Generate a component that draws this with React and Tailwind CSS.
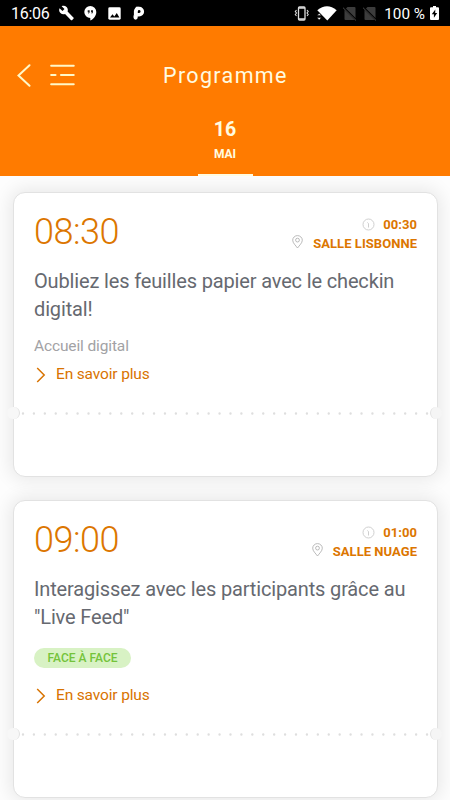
const SESSIONS = [
  {
    time: '08:30',
    duration: '00:30',
    room: 'SALLE LISBONNE',
    title: ['Oubliez les feuilles papier avec le checkin', 'digital!'],
    subtitle: 'Accueil digital',
  },
  {
    time: '09:00',
    duration: '01:00',
    room: 'SALLE NUAGE',
    title: ['Interagissez avec les participants grâce au', '"Live Feed"'],
    tag: 'FACE À FACE',
  },
];

function NoSim() {
  return (
    <svg width="14" height="15" viewBox="0 0 14 15">
      <path d="M4.500 1H11.500Q12.500 1 12.500 2V14H2.500Q1.500 14 1.500 13V4Z" fill="#3c3c3c" />
      <path d="M0 1 13.500 14.500" stroke="#000" strokeWidth="2" />
      <path d="M0 1.700 13 14.500" stroke="#4a4a4a" strokeWidth="1" />
    </svg>
  );
}

function StatusBar() {
  return (
    <div className="flex h-[26px] items-center bg-black pl-[11px] pr-[11px] text-white">
      <span className="w-[39px] whitespace-nowrap text-[16px] leading-[26px] tracking-[-0.3px] pt-[2px]">16:06</span>
      <svg className="ml-[8px]" width="17" height="16" viewBox="0 0 24 24" fill="#fff">
        <path d="M22.7 19l-9.1-9.1c.9-2.3.4-5-1.5-6.9-2-2-5-2.4-7.4-1.3L9 6 6 9 1.6 4.7C.4 7.1.9 10.1 2.9 12.1c1.9 1.9 4.6 2.4 6.9 1.5l9.1 9.1c.4.4 1 .4 1.4 0l2.3-2.3c.5-.4.5-1.1.1-1.4z" />
      </svg>
      <svg className="ml-[9px]" width="13" height="16" viewBox="0 0 13 16">
        <path d="M6.300 1a6 6 0 0 1 6 6c0 4-2.800 7-6 8.600v-2.600a6 6 0 0 1 0-12Z" fill="#fff" />
        <path d="M3.700 5.300h2v1.900l-.8 1.300h-.8l.5-1.300h-.9ZM7 5.300h2v1.900l-.8 1.300h-.8l.5-1.300H7Z" fill="#222" />
      </svg>
      <svg className="ml-[11px]" width="13" height="13" viewBox="0 0 13 13">
        <rect x=".3" y=".3" width="12.400" height="12.400" rx="1.400" fill="#fff" />
        <path d="M2 10.500 4.500 7.300 6.300 9.400 8.800 6.100 11.400 10.500Z" fill="#000" />
      </svg>
      <svg className="ml-[12px]" width="12" height="14" viewBox="0 0 12 14">
        <path d="M3 .7H6.200a4.900 4.900 0 0 1 0 9.800H4.700v1.100a2.100 2.100 0 0 1-4.200 0V9.500L1.700 9V5Z" fill="#fff" />
        <path d="M.9 5A4.500 4.500 0 0 1 5.500.7V9.500H.9Z" fill="#fff" />
        <path d="M4.800 7V5.400a1.400 1.400 0 1 1 1.400 1.500Z" fill="#000" />
      </svg>
      <div className="ml-auto flex items-center">
        <svg width="15" height="15" viewBox="0 0 15 15" fill="none" stroke="#ddd">
          <rect x="4.500" y="1" width="6.500" height="13" rx="1" strokeWidth="1.300" />
          <path d="M4.500 2H11M4.500 13H11" strokeWidth="1.500" />
          <path d="M2.500 4 1.300 5.500 2.500 7 1.300 8.500 2.500 10M13 4l1.200 1.500L13 7l1.200 1.500L13 10" strokeWidth="1.100" />
        </svg>
        <svg className="ml-[8px]" width="20" height="15" viewBox="0 0 20 15" fill="#fff">
          <path d="M.3 4.300Q10-4 19.700 4.300L10.300 14.500Z" />
          <path d="M0 9.500 2.200 7.500 4.400 9.500ZM0 11.500H4.400L2.200 14Z" stroke="#000" strokeWidth=".5" />
        </svg>
        <span className="ml-[6px]"><NoSim /></span>
        <span className="ml-[6px]"><NoSim /></span>
        <span className="ml-[7px] whitespace-nowrap pt-[2px] text-[15.300px] leading-[26px]">100 %</span>
        <svg className="ml-[5px]" width="9" height="14" viewBox="0 0 9 14">
          <path d="M3 0h3v1.300h2q1 0 1 1V13q0 1-1 1H1q-1 0-1-1V2.300q0-1 1-1h2Z" fill="#fff" />
          <path d="M5.300 3.500 1.800 8.300h2.100v3.500L7.200 6.900H5.200Z" fill="#000" />
        </svg>
      </div>
    </div>
  );
}

function Header() {
  return (
    <header className="relative z-10 h-[150px] bg-[#ff7b00] text-[#fffbe0]">
      <div className="grid h-[98px] grid-cols-[163px_1fr] items-center">
        <div className="flex items-center pl-[17px]">
          <svg width="14" height="23" viewBox="0 0 14 23" fill="none" stroke="#fff8c8" strokeWidth="2" strokeLinecap="round">
            <path d="M12.500 1.200 1.500 11.500l11 10.300" />
          </svg>
          <svg className="ml-[19px]" width="26" height="23" viewBox="0 0 26 23" fill="none" stroke="#fff8c8" strokeWidth="2.100" strokeLinecap="round">
            <path d="M1.200 1.700H23.700M1.200 11H5.500M11 11H23.700M1.200 20.300H23.700" />
          </svg>
        </div>
        <h1 className="whitespace-nowrap pt-[2px] text-[21.500px] font-normal tracking-[1.350px]">Programme</h1>
      </div>
      <div className="mx-auto flex h-[52px] w-[55px] flex-col items-center border-b-2 border-[#fffbe0] font-bold">
        <span className="-mt-[7px] text-[19.500px] leading-[26px]">16</span>
        <span className="mt-[3px] text-[12px] leading-[14px] pt-[1px]">MAI</span>
      </div>
    </header>
  );
}

function ClockIcon() {
  return (
    <svg width="13" height="13" viewBox="0 0 13 13" fill="none" stroke="#c9c9c9" strokeWidth=".9">
      <circle cx="6.500" cy="6.500" r="5.500" />
      <path d="M5.300 4.500 6.500 5.500V9.500" />
    </svg>
  );
}

function PinIcon() {
  return (
    <svg width="11" height="14" viewBox="0 0 11 14" fill="none" stroke="#b2b2b2" strokeWidth=".9">
      <path d="M5.500 13C3.700 10.500.7 8 .7 5.200a4.800 4.600 0 0 1 9.600 0C10.300 8 7.300 10.500 5.500 13Z" />
      <circle cx="5.500" cy="5.100" r="1.900" />
    </svg>
  );
}

function Perforation() {
  return (
    <div className="-ml-[27px] -mr-[24px] flex h-[13px] items-center justify-between">
      <span className="h-[12px] w-[13px] shrink-0 rounded-full border-r border-[#e2e2e2] bg-[#f7f7f7]" />
      <svg className="h-[13px] w-[410px] shrink-0" viewBox="0 0 410 13">
        <line x1="3" y1="6.500" x2="408" y2="6.500" stroke="#dedede" strokeWidth="2.400" strokeLinecap="round" strokeDasharray="0 10.920" />
      </svg>
      <span className="h-[12px] w-[12px] shrink-0 rounded-full border-l border-[#e2e2e2] bg-[#f5f5f5]" />
    </div>
  );
}

function SessionCard({ session }) {
  return (
    <article
      className={`rounded-[12px] border border-[#e2e2e2] bg-white pl-[20px] pr-[20px] shadow-[0_0_18px_3px_rgba(0,0,0,0.085)] ${
        session.tag ? 'h-[298px]' : 'h-[285px]'
      }`}
    >
      <div className="flex h-[74px] justify-between">
        <time className="pt-[21px] text-[36px] font-light leading-[36px] tracking-[-0.500px] text-[#dc7600]">{session.time}</time>
        <div className="flex flex-col items-end pt-[22px] text-[13px] font-bold leading-[19px] tracking-[0.050px] text-[#dc7600]">
          <div className="flex items-center gap-[8px]">
            <ClockIcon />
            <span>{session.duration}</span>
          </div>
          <div className="flex items-center gap-[10px]">
            <span className="-mt-[3px]"><PinIcon /></span>
            <span>{session.room}</span>
          </div>
        </div>
      </div>
      <h2 className="whitespace-nowrap text-[20px] font-normal leading-[28px] tracking-[-0.150px] text-[#666970]">
        {session.title.map((line) => (
          <span key={line} className="block">{line}</span>
        ))}
      </h2>
      {session.subtitle && (
        <p className="mt-[13px] text-[15.500px] leading-[20px] tracking-[-0.130px] text-[#a2a2a5]">{session.subtitle}</p>
      )}
      {session.tag && (
        <div className="mt-[17px] flex h-[20px] w-[97px] items-center justify-center rounded-full bg-[#d8f2c4] text-[12px] font-medium text-[#74c33a]">
          {session.tag}
        </div>
      )}
      <a className={`flex h-[20px] items-center gap-[10px] text-[15.500px] tracking-[-0.150px] text-[#d87300] ${session.tag ? 'mt-[18px]' : 'mt-[9px]'}`}>
        <svg className="ml-[2px]" width="10" height="16" viewBox="0 0 10 16" fill="none" stroke="#d87300" strokeWidth="1.500">
          <path d="M1.200 1 8.200 8 1.200 15" />
        </svg>
        <span>En savoir plus</span>
      </a>
      <div className="mt-[22px]">
        <Perforation />
      </div>
    </article>
  );
}

export default function App() {
  return (
    <div className="h-[800px] w-[450px] overflow-hidden bg-[#fdfdfd] font-['Roboto',sans-serif]">
      <StatusBar />
      <Header />
      <main className="flex flex-col gap-[23px] pl-[13px] pr-[12px] pt-[15.500px]">
        {SESSIONS.map((session) => (
          <SessionCard key={session.time} session={session} />
        ))}
      </main>
    </div>
  );
}
